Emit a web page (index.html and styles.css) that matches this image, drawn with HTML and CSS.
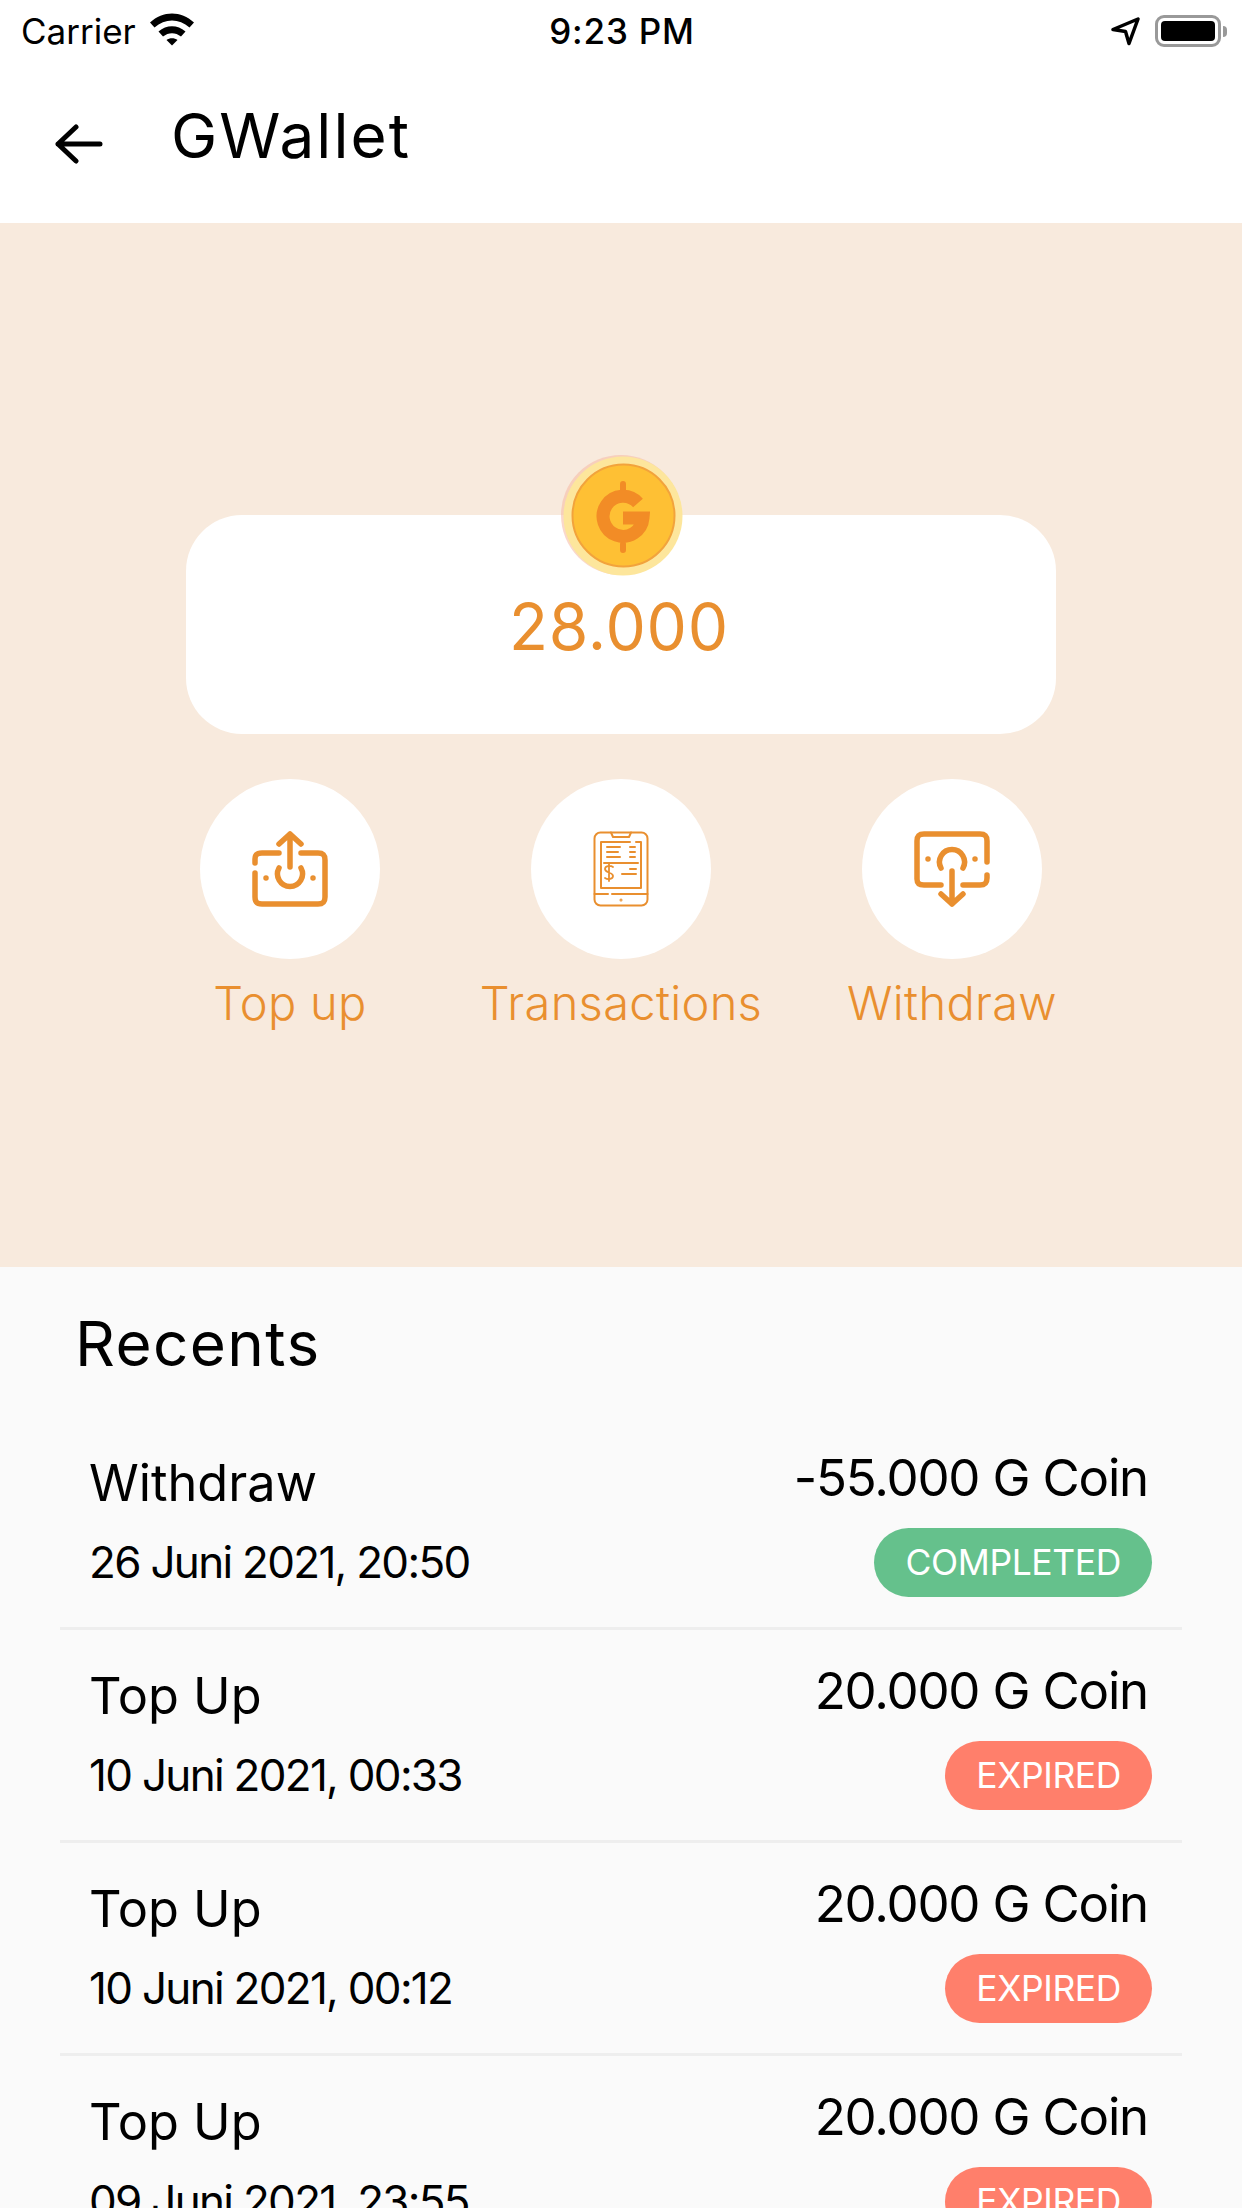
FILE: index.html
```html
<!DOCTYPE html>
<html lang="en">
<head>
    <meta charset="UTF-8">
    <meta name="viewport" content="width=device-width, initial-scale=1.0">
    <title>GWallet</title>
    <link rel="stylesheet" href="styles.css">
</head>
<body>
    <div class="status-bar">
        <div class="status-left">
            <span>Carrier</span>
            <svg class="wifi" width="46" height="34" viewBox="0 0 46 34">
                <path d="M1 10.5C14 -1.5 32 -1.500 45 10.500L40.500 15.500C30 6 16 6 5.500 15.500Z" fill="#000"/>
                <path d="M9.500 19.500C17.500 12.500 28.500 12.500 36.500 19.500L32 24.500C26.500 20 19.500 20 14 24.500Z" fill="#000"/>
                <path d="M17.500 28C20.500 25.500 25.500 25.500 28.500 28L23 33.500Z" fill="#000"/>
            </svg>
        </div>
        <div class="status-time">9:23 PM</div>
        <div class="status-right">
            <svg width="30" height="30" viewBox="0 0 30 30">
                <path d="M2 13.500L27 3L18 27.500L14.500 15.500Z" fill="none" stroke="#000" stroke-width="3.500" stroke-linejoin="round"/>
            </svg>
            <div class="battery"><div class="battery-fill"></div></div>
            <div class="battery-cap"></div>
        </div>
    </div>

    <header class="app-header">
        <svg class="back" width="48" height="40" viewBox="0 0 48 40">
            <path d="M3 20H45M21 3L3 20L21 37" fill="none" stroke="#000" stroke-width="5" stroke-linecap="round" stroke-linejoin="round"/>
        </svg>
        <h1>GWallet</h1>
    </header>

    <section class="wallet">
        <div class="balance-card">
            <svg class="coin" width="126" height="126" viewBox="0 0 126 126">
                <circle cx="61" cy="61" r="60" fill="#f5b8a0" opacity="0.55"/>
                <circle cx="63" cy="62" r="59.500" fill="#fde69c"/>
                <circle cx="63.500" cy="61.500" r="51" fill="#fec034" stroke="#f2a33c" stroke-width="2"/>
                <path d="M63 30V38M63 90V96" stroke="#f28c26" stroke-width="6" stroke-linecap="round"/>
                <path d="M78 49A20 20 0 1 0 83 64H63" fill="none" stroke="#f28c26" stroke-width="13"/>
            </svg>
            <div class="balance">28.000</div>
        </div>

        <div class="actions">
            <div class="action">
                <div class="action-icon">
                    <svg width="76" height="76" viewBox="0 0 76 76" fill="none" stroke="#e98f2f" stroke-width="5.500" stroke-linecap="round" stroke-linejoin="round">
                        <path d="M38 36V3M27 13L38 3L49 13"/>
                        <path d="M27 22H10C5 22 3 24 3 28V32M3 42V66C3 71 5 73 10 73H66C71 73 73 71 73 66V29C73 24 71 22 66 22H49"/>
                        <path d="M27 37A12.500 12.500 0 1 0 49 37"/>
                        <circle cx="14" cy="47" r="1.500" stroke-width="2.500"/>
                        <circle cx="61" cy="47" r="1.500" stroke-width="2.500"/>
                    </svg>
                </div>
                <div class="action-label">Top up</div>
            </div>
            <div class="action">
                <div class="action-icon">
                    <svg width="56" height="76" viewBox="0 0 56 76" fill="none" stroke="#e98f2f" stroke-width="2" stroke-linecap="round" stroke-linejoin="round">
                        <rect x="1.500" y="1.500" width="53" height="73" rx="6"/>
                        <path d="M18 1.500L20 6H36L38 1.500"/>
                        <path d="M37 11H8V57H48V11H43"/>
                        <path d="M14 16H27M14 21H25M14 26H27M37 16H42M37 21H42M37 26H42M11 32H45M29 43H43M37 38H43"/>
                        <path d="M20 36C17 34 12 35 12 38C12 42 20 41 20 45C20 48 15 49 12 47M16 33V50" stroke-width="1.800"/>
                        <path d="M1.500 63H15M19 63H54.500"/>
                        <circle cx="28" cy="69" r="0.500"/>
                    </svg>
                </div>
                <div class="action-label">Transactions</div>
            </div>
            <div class="action">
                <div class="action-icon">
                    <svg width="76" height="76" viewBox="0 0 76 76" fill="none" stroke="#e98f2f" stroke-width="5.500" stroke-linecap="round" stroke-linejoin="round">
                        <path d="M38 73V40M27 63L38 73L49 63"/>
                        <path d="M27 54H10C5 54 3 52 3 48V10C3 5 5 3 10 3H66C71 3 73 5 73 10V31M73 44V47C73 52 71 54 66 54H49"/>
                        <path d="M27 37A12.500 12.500 0 1 1 49 37"/>
                        <circle cx="14" cy="28" r="1.500" stroke-width="2.500"/>
                        <circle cx="61" cy="28" r="1.500" stroke-width="2.500"/>
                    </svg>
                </div>
                <div class="action-label">Withdraw</div>
            </div>
        </div>
    </section>

    <section class="recents">
        <h2>Recents</h2>

        <div class="row">
            <div class="row-left">
                <div class="row-title">Withdraw</div>
                <div class="row-date">26 Juni 2021, 20:50</div>
            </div>
            <div class="row-right">
                <div class="row-amount">-55.000 G Coin</div>
                <div class="pill completed">COMPLETED</div>
            </div>
        </div>

        <div class="row">
            <div class="row-left">
                <div class="row-title">Top Up</div>
                <div class="row-date">10 Juni 2021, 00:33</div>
            </div>
            <div class="row-right">
                <div class="row-amount">20.000 G Coin</div>
                <div class="pill expired">EXPIRED</div>
            </div>
        </div>

        <div class="row">
            <div class="row-left">
                <div class="row-title">Top Up</div>
                <div class="row-date">10 Juni 2021, 00:12</div>
            </div>
            <div class="row-right">
                <div class="row-amount">20.000 G Coin</div>
                <div class="pill expired">EXPIRED</div>
            </div>
        </div>

        <div class="row">
            <div class="row-left">
                <div class="row-title">Top Up</div>
                <div class="row-date">09 Juni 2021, 23:55</div>
            </div>
            <div class="row-right">
                <div class="row-amount">20.000 G Coin</div>
                <div class="pill expired">EXPIRED</div>
            </div>
        </div>
    </section>
</body>
</html>
```

FILE: styles.css
```css
html, body {
    height: 2208px;
    overflow: hidden;
}

body {
    margin: 0;
    font-family: 'Inter', 'Open Sans', sans-serif;
    background-color: #fff;
    color: #000;
}

.status-bar {
    height: 62px;
    display: grid;
    grid-template-columns: 1fr auto 1fr;
    align-items: center;
    padding: 0 15px 0 21px;
    font-size: 35px;
}

.status-left {
    display: flex;
    align-items: center;
    gap: 13px;
}

.wifi {
    margin-top: -4px;
}

.status-time {
    font-weight: 500;
    letter-spacing: 0.8px;
    margin-right: 4px;
}

.status-right {
    display: flex;
    align-items: center;
    justify-content: flex-end;
}

.status-right svg {
    margin-right: 14px;
}

.battery {
    width: 66px;
    height: 32px;
    box-sizing: border-box;
    border: 3px solid #999;
    border-radius: 9px;
    padding: 3px;
}

.battery-fill {
    height: 100%;
    background-color: #000;
    border-radius: 4px;
}

.battery-cap {
    width: 4px;
    height: 11px;
    margin-left: 2px;
    background-color: #999;
    border-radius: 0 4px 4px 0;
}

.app-header {
    height: 161px;
    display: flex;
    align-items: center;
    padding-left: 55px;
    box-sizing: border-box;
    padding-bottom: 14px;
}

.back {
    margin-top: 16px;
}

.app-header h1 {
    margin: 0 0 0 68px;
    font-size: 62px;
    font-weight: 400;
    letter-spacing: 2.1px;
}

.wallet {
    height: 1044px;
    background-color: #f8eadd;
    padding-top: 292px;
    box-sizing: border-box;
    color: #e98f2f;
}

.balance-card {
    position: relative;
    width: 870px;
    height: 219px;
    margin-left: 186px;
    background-color: #fff;
    border-radius: 56px;
    box-sizing: border-box;
    padding: 74px 4px 0 0;
    text-align: center;
}

.coin {
    position: absolute;
    left: 374px;
    top: -61px;
}

.balance {
    font-size: 64px;
    line-height: 76px;
    letter-spacing: 0.8px;
}

.actions {
    display: grid;
    grid-template-columns: repeat(3, 331px);
    justify-content: center;
    margin-top: 45px;
}

.action {
    display: flex;
    flex-direction: column;
    align-items: center;
}

.action-icon {
    width: 180px;
    height: 180px;
    border-radius: 50%;
    background-color: #fff;
    display: flex;
    align-items: center;
    justify-content: center;
}

.action-label {
    margin-top: 16px;
    font-size: 47px;
    line-height: 56px;
    letter-spacing: 0.3px;
    white-space: nowrap;
    font-weight: 300;
}

.recents {
    height: 941px;
    background-color: #fafafa;
    padding: 0 60px;
    box-sizing: border-box;
}

.recents h2 {
    margin: 0;
    height: 150px;
    padding: 42px 0 0 15px;
    box-sizing: border-box;
    font-size: 62px;
    line-height: 70px;
    font-weight: 400;
    letter-spacing: 1.4px;
}

.row {
    height: 213px;
    box-sizing: border-box;
    border-bottom: 3px solid #eeeeee;
    padding: 0 30px;
    display: flex;
    justify-content: space-between;
}

.row-left {
    padding-top: 34px;
    margin-left: -1px;
}

.row-title {
    font-size: 50.5px;
    line-height: 64px;
}

.row-date {
    margin-top: 19px;
    font-size: 44px;
    line-height: 56px;
    letter-spacing: -1.7px;
}

.row-right {
    padding-top: 29px;
    display: flex;
    flex-direction: column;
    align-items: flex-end;
}

.row-amount {
    font-size: 51px;
    line-height: 64px;
    letter-spacing: -1.2px;
    margin-right: 4px;
}

.pill {
    margin-top: 18px;
    height: 69px;
    line-height: 69px;
    padding: 0 31px;
    border-radius: 35px;
    color: #fff;
    font-size: 35.5px;
    letter-spacing: -0.4px;
}

.completed {
    background-color: #65c18c;
}

.expired {
    background-color: #ff7f6b;
}
```
